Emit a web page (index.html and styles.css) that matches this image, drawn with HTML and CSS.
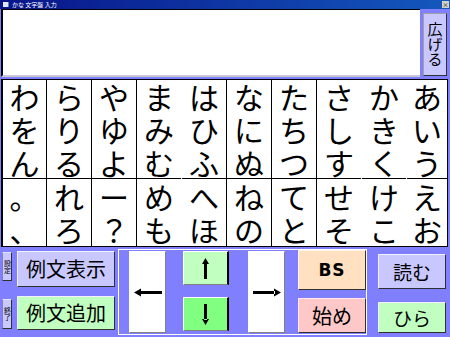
FILE: index.html
```html
<!DOCTYPE html>
<html>

<head>
    <meta charset="UTF-8">
    <title>かな文字盤</title>
    <link rel="stylesheet" href="styles.css">
</head>

<body>
    <div class="titlebar">
        <span class="app-icon"></span>
        <span class="title">かな 文字盤 入力</span>
        <span class="close">×</span>
    </div>

    <div class="top">
        <div class="text-area"></div>
        <div class="side">
            <div class="key lavender expand">広げる</div>
        </div>
    </div>

    <div class="board">
        <div class="col"><div class="upper"><span>わ</span><span>を</span><span>ん</span></div><div class="lower"><span>。</span><span>、</span></div></div>
        <div class="col"><div class="upper"><span>ら</span><span>り</span><span>る</span></div><div class="lower"><span>れ</span><span>ろ</span></div></div>
        <div class="col"><div class="upper"><span>や</span><span>ゆ</span><span>よ</span></div><div class="lower"><span>ー</span><span>？</span></div></div>
        <div class="col open"><div class="upper"><span>ま</span><span>み</span><span>む</span></div><div class="lower"><span>め</span><span>も</span></div></div>
        <div class="col"><div class="upper"><span>は</span><span>ひ</span><span>ふ</span></div><div class="lower"><span>へ</span><span>ほ</span></div></div>
        <div class="col"><div class="upper"><span>な</span><span>に</span><span>ぬ</span></div><div class="lower"><span>ね</span><span>の</span></div></div>
        <div class="col"><div class="upper"><span>た</span><span>ち</span><span>つ</span></div><div class="lower"><span>て</span><span>と</span></div></div>
        <div class="col open"><div class="upper"><span>さ</span><span>し</span><span>す</span></div><div class="lower"><span>せ</span><span>そ</span></div></div>
        <div class="col open"><div class="upper"><span>か</span><span>き</span><span>く</span></div><div class="lower"><span>け</span><span>こ</span></div></div>
        <div class="col"><div class="upper"><span>あ</span><span>い</span><span>う</span></div><div class="lower"><span>え</span><span>お</span></div></div>
    </div>

    <div class="panel">
        <div class="side-keys">
            <div class="key lavender tiny settings">設定</div>
            <div class="key lavender tiny quit">終了</div>
        </div>

        <div class="example-keys">
            <div class="key lavender show">例文表示</div>
            <div class="key mint add">例文追加</div>
        </div>

        <div class="frame">
            <div class="key blank arrow-box left-box">
                <svg width="28" height="9" viewBox="0 0 28 9">
                    <path d="M6 3h22v3H6z M0 4.5 L7 0.5 V8.5 Z" />
                </svg>
            </div>

            <div class="updown">
                <div class="key mint arrow-key up">
                    <svg width="7" height="21" viewBox="0 0 7 21">
                        <path d="M2 5h3v16H2z M3.5 0 L7 6 H0 Z" />
                    </svg>
                </div>
                <div class="key green arrow-key down">
                    <svg width="7" height="21" viewBox="0 0 7 21">
                        <path d="M2 0h3v16H2z M3.5 21 L7 15 H0 Z" />
                    </svg>
                </div>
            </div>

            <div class="key blank arrow-box right-box">
                <svg width="28" height="9" viewBox="0 0 28 9">
                    <path d="M0 3h22v3H0z M28 4.5 L21 0.5 V8.5 Z" />
                </svg>
            </div>

            <div class="edit-keys">
                <div class="key peach bs">BS</div>
                <div class="key pink start">始め</div>
            </div>
        </div>

        <div class="read-keys">
            <div class="key lavender read">読む</div>
            <div class="key mint hira">ひら</div>
        </div>
    </div>
</body>

</html>
```

FILE: styles.css
```css
:root {
    --panel: #8080FF;
    --lavender: #C8C8FF;
    --mint: #C0FFC0;
    --green: #80FF80;
    --peach: #FFE0C0;
    --pink: #FFC8C8;
    --line: #000000;
}

body {
    margin: 0;
    width: 450px;
    height: 337px;
    overflow: hidden;
    background-color: var(--panel);
    font-family: "Noto Sans CJK JP", "DejaVu Sans", sans-serif;
    color: #000;
}

/* Barre de titre */
.titlebar {
    height: 9px;
    display: flex;
    align-items: center;
    gap: 3px;
    padding: 0 1px 0 3px;
    background: linear-gradient(to right, #08148A, #1458BC);
    color: #fff;
    font-size: 6px;
    line-height: 1;
}

.app-icon {
    width: 5px;
    height: 5px;
    background-color: #E0E8FF;
    border-right: 1px solid #5080E0;
}

.title {
    flex: 1;
}

.close {
    width: 7px;
    height: 7px;
    display: flex;
    align-items: center;
    justify-content: center;
    background-color: #D4D0C8;
    color: #000;
    font-size: 6px;
}

/* Zone de texte */
.top {
    display: flex;
    height: 68px;
}

.text-area {
    flex: 1;
    background-color: #fff;
    border-top: 1px solid var(--line);
    border-left: 2px solid var(--line);
    border-bottom: 2px solid #C8C8D8;
    margin-left: 1px;
}

.side {
    width: 30px;
    padding: 4px 0 0 3px;
    box-sizing: border-box;
}

/* Touches */
.key {
    box-sizing: border-box;
    display: flex;
    align-items: center;
    justify-content: center;
    border: 1px solid;
    border-color: #F0F0FF #303030 #303030 #F0F0FF;
    line-height: 1;
}

.lavender {
    background-color: var(--lavender);
}

.mint {
    background-color: var(--mint);
}

.green {
    background-color: var(--green);
}

.peach {
    background-color: var(--peach);
}

.pink {
    background-color: var(--pink);
}

.blank {
    background-color: #fff;
}

.expand {
    width: 24px;
    height: 63px;
    writing-mode: vertical-rl;
    font-size: 15px;
    border-color: #A0A0A0 #303030 #303030 #A0A0A0;
}

/* Tableau des kana */
.board {
    margin: 2px 0 0 1px;
    width: 447px;
    box-sizing: border-box;
    border: 1px solid var(--line);
    border-left-width: 2px;
    background-color: #fff;
    display: grid;
    grid-template-columns: 44px repeat(8, 45px) 40px;
    font-size: 30px;
    line-height: 1;
}

.col {
    display: flex;
    flex-direction: column;
    border-right: 1px solid var(--line);
}

.col.open {
    border-right-color: #fff;
}

.col:last-child {
    border-right: 0;
}

.upper {
    height: 98px;
    display: flex;
    flex-direction: column;
}

.lower {
    height: 67px;
    display: flex;
    flex-direction: column;
    border-top: 1px solid var(--line);
}

.upper span,
.lower span {
    flex: 1;
    display: flex;
    align-items: center;
    justify-content: center;
}

/* Panneau du bas */
.panel {
    display: flex;
    align-items: flex-start;
    height: 90px;
}

.side-keys {
    margin: 5px 0 0 2px;
    width: 10px;
    display: flex;
    flex-direction: column;
    gap: 18px;
}

.tiny {
    height: 29px;
    writing-mode: vertical-rl;
    font-size: 7px;
    border-color: #E0E0FF #303030 #303030 #8080C0;
}

.quit {
    height: 30px;
}

.example-keys {
    margin: 4px 0 0 5px;
    width: 98px;
    display: flex;
    flex-direction: column;
    gap: 9px;
    font-size: 20px;
}

.show {
    height: 36px;
}

.add {
    height: 34px;
}

.frame {
    margin: 2px 0 0 3px;
    width: 249px;
    height: 86px;
    box-sizing: border-box;
    border: 1px solid #fff;
    display: flex;
    align-items: flex-start;
}

.arrow-box {
    margin-top: 1px;
    width: 37px;
    height: 82px;
    border-color: #fff #808080 #808080 #fff;
}

.left-box {
    margin-left: 10px;
}

.right-box {
    margin-left: 19px;
}

.updown {
    margin: 1px 0 0 17px;
    width: 46px;
    display: flex;
    flex-direction: column;
    gap: 12px;
}

.arrow-key {
    height: 34px;
    border-color: #fff #000 #808080 #fff;
    border-right-width: 2px;
}

.edit-keys {
    margin-left: 13px;
    width: 68px;
    display: flex;
    flex-direction: column;
    gap: 8px;
}

.bs {
    height: 40px;
    font-family: "DejaVu Sans", sans-serif;
    font-size: 17px;
    font-weight: bold;
    letter-spacing: 1px;
    border-color: #FFF4E8 #303030 #303030 #FFF4E8;
}

.start {
    height: 35px;
    font-size: 20px;
    border-color: #FFE8E8 #303030 #303030 #FFE8E8;
}

.read-keys {
    margin: 7px 0 0 11px;
    width: 68px;
    display: flex;
    flex-direction: column;
    gap: 13px;
    font-size: 19px;
}

.read {
    height: 35px;
}

.hira {
    height: 31px;
}
```
